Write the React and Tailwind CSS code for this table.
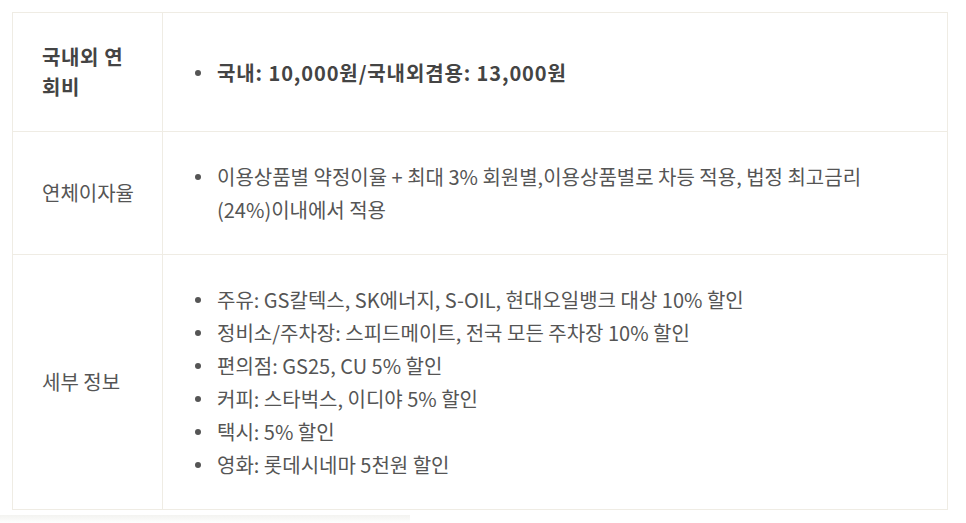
const rows = [
  {
    label: "국내외 연\n회비",
    bold: true,
    items: ["국내: 10,000원/국내외겸용: 13,000원"],
  },
  {
    label: "연체이자율",
    items: [
      "이용상품별 약정이율 + 최대 3% 회원별,이용상품별로 차등 적용, 법정 최고금리 (24%)이내에서 적용",
    ],
  },
  {
    label: "세부 정보",
    items: [
      "주유: GS칼텍스, SK에너지, S-OIL, 현대오일뱅크 대상 10% 할인",
      "정비소/주차장: 스피드메이트, 전국 모든 주차장 10% 할인",
      "편의점: GS25, CU 5% 할인",
      "커피: 스타벅스, 이디야 5% 할인",
      "택시: 5% 할인",
      "영화: 롯데시네마 5천원 할인",
    ],
  },
];

export default function App() {
  return (
    <div
      className="w-[966px] h-[523px] bg-white pt-3 pl-3 text-[#555]"
      style={{ fontFamily: "'Noto Sans CJK KR', 'Noto Sans', sans-serif" }}
    >
      <table className="w-[936px] border-collapse border border-[#efece4] text-[20px]">
        <tbody>
          {rows.map((r) => (
            <tr key={r.label} className="border-b border-[#efece4]">
              <td
                className={`w-[150px] border-r border-[#efece4] pl-[29px] pr-4 py-[29px] leading-[30px] whitespace-pre-line align-middle ${
                  r.bold ? "font-bold text-[#444] tracking-[0.6px]" : ""
                }`}
              >
                {r.label}
              </td>
              <td className="pl-[32px] pr-[60px] py-[28px] align-middle">
                <ul className="flex flex-col">
                  {r.items.map((t) => (
                    <li key={t} className="flex leading-[33px]">
                      <span className="w-[22px] shrink-0 flex items-start pt-[14px]">
                        <span className="w-[6px] h-[6px] rounded-full bg-[#555]" />
                      </span>
                      <span className={r.bold ? "font-bold text-[#444] tracking-[0.9px]" : ""}>{t}</span>
                    </li>
                  ))}
                </ul>
              </td>
            </tr>
          ))}
        </tbody>
      </table>
      <div className="mt-[5px] -ml-3 w-[410px] h-[9px] bg-gradient-to-b from-[#f3f3f0] to-white" />
    </div>
  );
}
